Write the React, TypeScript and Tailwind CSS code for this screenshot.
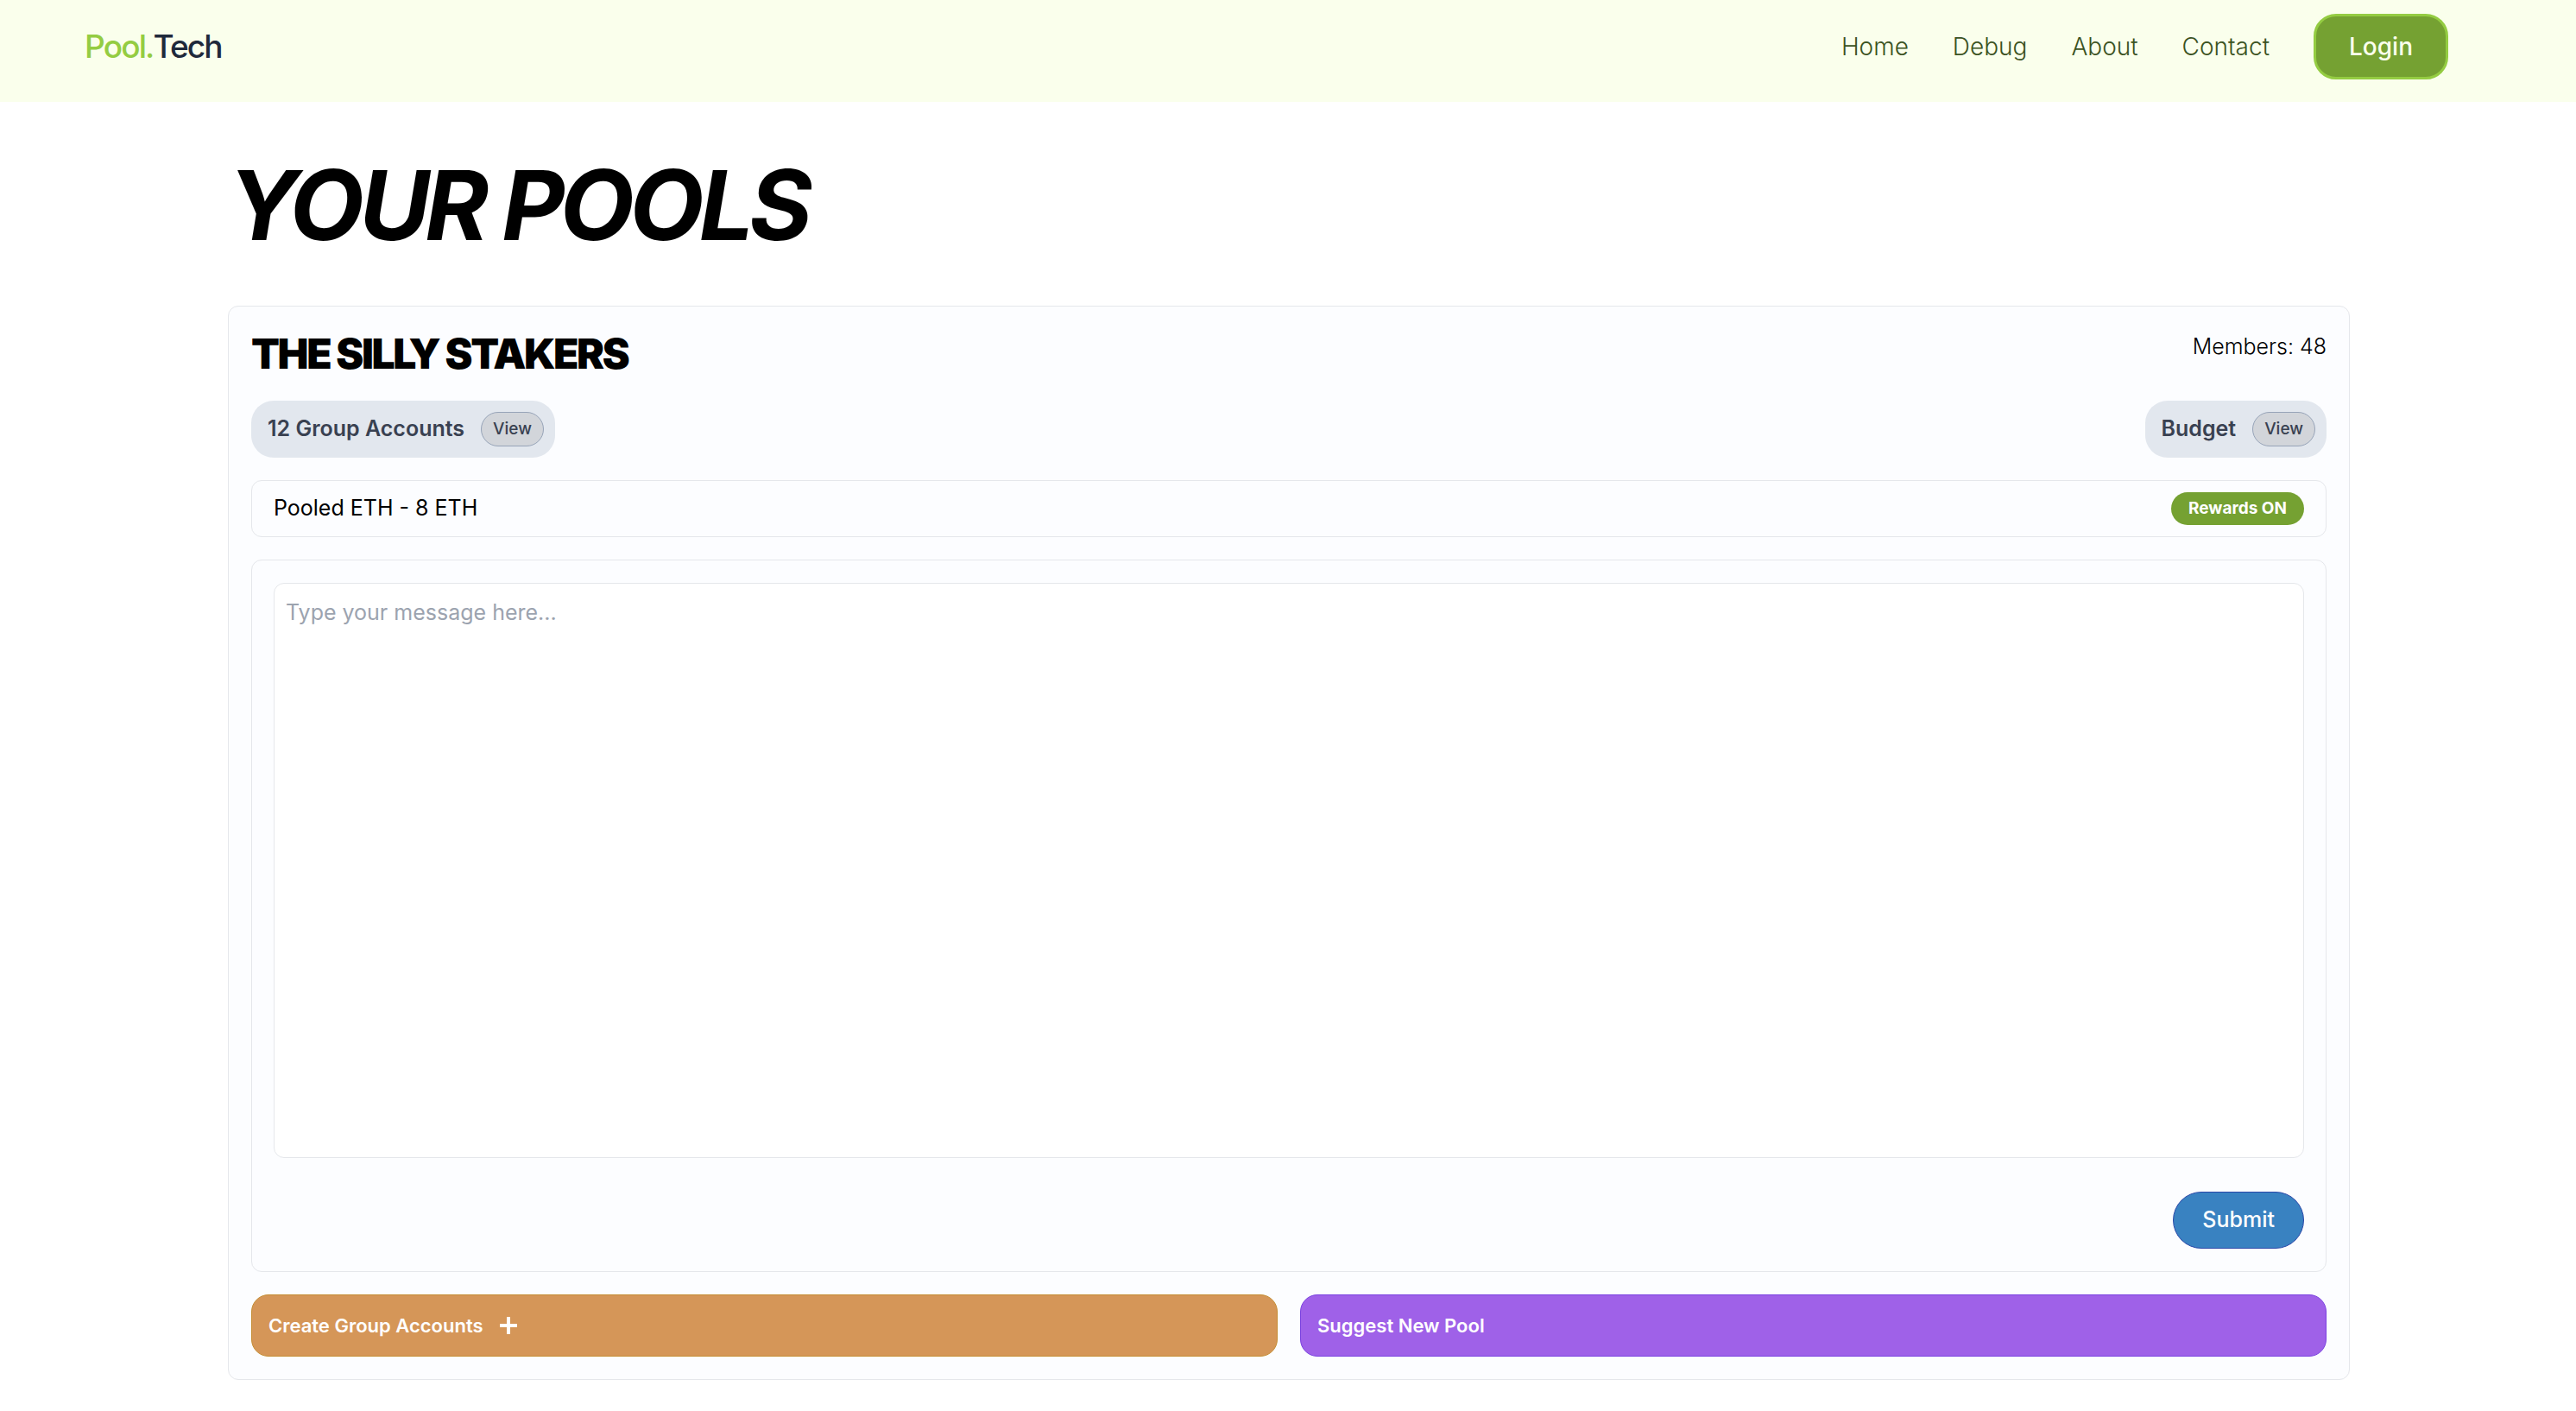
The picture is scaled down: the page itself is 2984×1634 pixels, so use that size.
import React from "react";

const navLinks = ["Home", "Debug", "About", "Contact"];

function Header() {
  return (
    <header className="flex h-[118px] items-start justify-between bg-[#faffec] pr-[148px] pl-[98px] pt-4">
      <a href="#" className="flex h-[76px] items-center text-[37px] font-medium tracking-tighter text-[#1f293b]">
        <span className="text-[#94cc42]">Pool.</span>Tech
      </a>
      <nav className="flex h-[76px] items-center gap-[51px] text-[28px] font-light text-[#3b5222]">
        {navLinks.map((label) => (
          <a key={label} href="#">
            {label}
          </a>
        ))}
        <button
          type="button"
          className="h-[76px] rounded-[26px] border-[3px] border-[#94cc42] bg-[#75a132] px-[38px] font-medium text-[#faffec]"
        >
          Login
        </button>
      </nav>
    </header>
  );
}

function ViewPill({ id, label }: { id: string; label: string }) {
  return (
    <div className="flex h-[66px] items-center gap-[19px] rounded-[26px] bg-[#e2e7ee] pr-[13px] pl-[19px]">
      <span id={id} className="text-[25px] font-semibold text-[#394151]">
        {label}
      </span>
      <button
        type="button"
        aria-describedby={id}
        className="h-10 rounded-full border border-[#97a4b8] bg-[#d2d5da] px-[13px] text-[19px] font-medium text-[#394151]"
      >
        View
      </button>
    </div>
  );
}

export default function App() {
  return (
    <div className="min-h-screen bg-white font-['Inter',sans-serif] text-black">
      <Header />
      <main className="mr-[262px] ml-[264px]">
        <h1 className="pt-[59px] text-[112px] leading-[120px] font-bold tracking-tighter italic">
          YOUR POOLS
        </h1>
        <section className="mt-[57px] flex flex-col gap-[26px] rounded-xl border border-[#e5e7eb] bg-[#fcfdff] p-[26px]">
          <div className="flex h-[57px] items-start justify-between">
            <h2 className="text-[48px] leading-[57px] font-black tracking-tighter">THE SILLY STAKERS</h2>
            <p className="text-[25px] leading-10 font-light">Members: 48</p>
          </div>
          <div className="flex justify-between">
            <ViewPill id="group-accounts" label="12 Group Accounts" />
            <ViewPill id="budget" label="Budget" />
          </div>
          <div className="flex h-[66px] items-center justify-between rounded-xl border border-[#e5e7eb] px-[25px]">
            <p className="text-[25px]">Pooled ETH - 8 ETH</p>
            <span className="flex h-[38px] items-center rounded-full bg-[#75a132] px-5 text-[19px] font-bold text-white">
              Rewards ON
            </span>
          </div>
          <form
            className="flex flex-col items-end rounded-xl border border-[#e5e7eb] px-[25px] py-[26px]"
            onSubmit={(e) => e.preventDefault()}
          >
            <textarea
              aria-label="Message"
              placeholder="Type your message here..."
              className="block h-[666px] w-full resize-none rounded-xl border border-[#e5e7eb] bg-white px-[13px] py-[13px] text-[25px] leading-10 outline-none placeholder:text-[#9ca3af]"
            />
            <button
              type="submit"
              className="mt-[39px] h-[66px] rounded-full border border-[#2b48a8] bg-[#3982c1] px-[33px] text-[25px] font-medium text-white"
            >
              Submit
            </button>
          </form>
          <div className="grid grid-cols-2 gap-[26px] text-[22px] font-semibold text-white">
            <button
              type="button"
              className="flex h-[72px] items-center gap-[18px] rounded-[20px] border border-[#c58d33] bg-[#d59658] px-[19px]"
            >
              Create Group Accounts
              <svg viewBox="0 0 22 22" className="size-[22px]" fill="none" stroke="currentColor" strokeWidth="4" aria-hidden="true">
                <path d="M11 1v20M1 11h20" />
              </svg>
            </button>
            <button
              type="button"
              className="flex h-[72px] items-center rounded-[20px] border border-[#7a42e0] bg-[#9f61e8] px-[19px]"
            >
              Suggest New Pool
            </button>
          </div>
        </section>
      </main>
    </div>
  );
}
